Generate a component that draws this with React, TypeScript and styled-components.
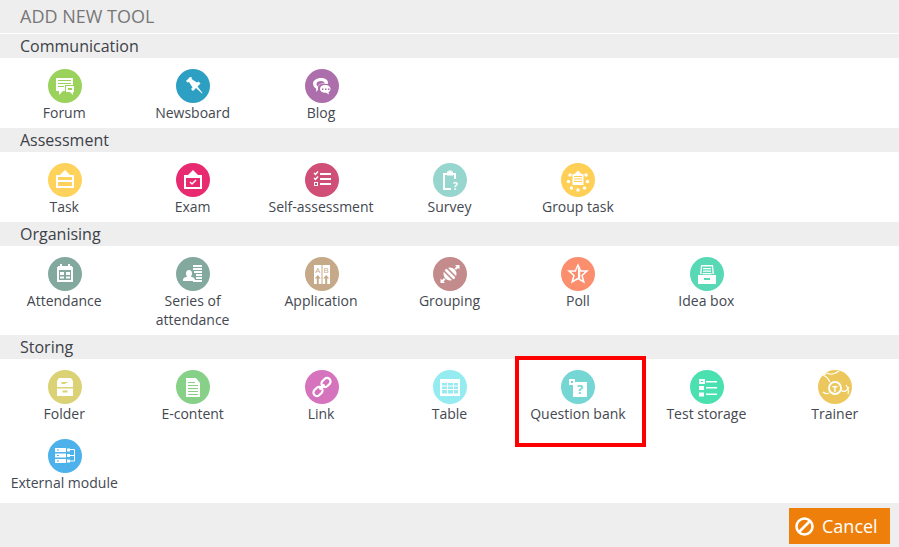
import * as React from 'react';
import styled, { createGlobalStyle } from 'styled-components';

const GlobalStyle = createGlobalStyle`
    html, body {
        margin: 0;
        padding: 0;
        background: #eeeeee;
        font-family: "Open Sans", "Liberation Sans", sans-serif;
    }
`;

const Page = styled.div`
    width: 899px;
    height: 547px;
    overflow: hidden;
    background: #eeeeee;
`;

const Title = styled.h1`
    margin: 0;
    height: 33px;
    padding-left: 20px;
    font-size: 18px;
    line-height: 33px;
    font-weight: 400;
    color: #777777;
    border-bottom: 1px solid #ffffff;
`;

const SectionTitle = styled.h2`
    margin: 0;
    height: 24px;
    padding-left: 20px;
    font-size: 16px;
    line-height: 24px;
    font-weight: 400;
    color: #3d4148;
`;

const ToolGrid = styled.div<{ $last?: boolean }>`
    display: grid;
    grid-template-columns: repeat(7, 1fr);
    row-gap: 16px;
    padding: 11px 0 ${props => (props.$last ? 11 : 6)}px;
    background: #ffffff;
`;

const Tool = styled.div<{ $marked?: boolean }>`
    position: relative;
    display: flex;
    flex-direction: column;
    align-items: center;
    text-align: center;
    &::after {
        content: "";
        display: ${props => (props.$marked ? 'block' : 'none')};
        position: absolute;
        top: -14px;
        left: 1px;
        width: 131px;
        height: 91px;
        box-sizing: border-box;
        border: 4px solid #ff0000;
    }
`;

const IconCircle = styled.div<{ $color: string }>`
    width: 34px;
    height: 34px;
    margin-left: 1px;
    border-radius: 50%;
    overflow: hidden;
    background: ${props => props.$color};
    color: ${props => props.$color};
    svg {
        display: block;
    }
`;

const ToolLabel = styled.span`
    font-size: 14px;
    line-height: 19px;
    color: #444850;
`;

const Footer = styled.div`
    display: flex;
    justify-content: flex-end;
    padding: 5px 9px 0 0;
`;

const CancelButton = styled.button`
    display: flex;
    align-items: center;
    gap: 8px;
    width: 101px;
    height: 36px;
    padding: 0 0 0 6px;
    border: 0;
    background: #ee7f0a;
    color: #ffffff;
    font-family: inherit;
    font-size: 18px;
`;

const Glyph = ({ children }: { children: React.ReactNode }) => (
    <svg width="34" height="34" viewBox="0 0 34 34" fill="#fff">{children}</svg>
);

const CancelIcon = () => (
    <svg width="19" height="19" viewBox="0 0 19 19" fill="none" stroke="#fff" strokeWidth="2.6">
        <circle cx="9.5" cy="9.5" r="8" />
        <path d="M4 15L15 4" />
    </svg>
);

const icons: Record<string, React.ReactNode> = {
    forum: <>
        <path d="M8 9h17v7h-8v6h-2l-4 4v-4H8z" />
        <path d="M10 11h13v1H10zM10 14h13v1H10zM10 17h6v1h-6z" fill="currentColor" />
        <path d="M18 17h8v6h-1v3l-3-3h-4z" />
        <path d="M20 19h4v2h-4z" fill="currentColor" />
    </>,
    newsboard: <path d="M14 8l-4 4 1.500 1.500 1.500-.5 3.500 5.500-1.500 1.500 2 2 3-3 6 5.500.5-.5-5-6.500 3-3-2-2-1.500 1-5.500-3.500.5-1.500z" />,
    blog: <>
        <path d="M16 9c4 0 7 2 7 4.500 0 .5 0 1-.3 1.500H17c-2.500 0-4 1.500-4 4 0 .5 0 1 .2 1.400L11 23l.3-3.300C9.300 18.500 8 16.500 8 14.500 8 11.500 11.500 9 16 9z" />
        <path d="M16 12c-2.500 0-4.500 1-4.500 3 0 1 .5 2 1.500 2.500.5-2 2-3 4-3h3c-.5-1.500-2-2.500-4-2.500z" fill="currentColor" />
        <path d="M20 16c3 0 5.500 1.500 5.500 4 0 1.300-.8 2.500-2 3.200l.5 2.300-3-1.800c-3.500.3-6-1.500-6-3.700 0-2.500 2-4 5-4z" />
        <path d="M17 19.500h1.500V21H17zM20 19.500h1.500V21H20zM23 19.500h1.500V21H23z" fill="currentColor" />
    </>,
    task: <>
        <path d="M17 7l5 5H12z" />
        <path fillRule="evenodd" d="M8 12h18v13H8zM10 14v3h14v-3zM10 19v4h14v-4z" />
    </>,
    exam: <>
        <path d="M17 7l5 5H12z" />
        <path fillRule="evenodd" d="M8 12h18v14H8zM10 15v9h14v-9z" />
        <path d="M14 19l2 2 4-4" fill="none" stroke="#fff" strokeWidth="1.500" />
    </>,
    self: <>
        <path d="M9 10l1.500 1.500L13 8.500M9 15l1.500 1.500 2.500-3" fill="none" stroke="#fff" strokeWidth="1.500" />
        <path fillRule="evenodd" d="M9 19h4v4H9zM10 20v2h2v-2z" />
        <path d="M15 10h11v2H15zM15 15h11v2H15zM15 20h11v2H15z" />
    </>,
    survey: <>
        <path fillRule="evenodd" d="M10 10h4V8.500h1.500V7.500h3v1H20V10h3v6h-2v-4H12v13h6v2H10z" />
        <path d="M14 9.500h6v3h-6z" />
        <text x="20" y="27" fontSize="10" fontWeight="700" fill="#fff" fontFamily="Open Sans">?</text>
    </>,
    group: <>
        <path d="M17 7.500l3.500 3.500h-7z" />
        <path fillRule="evenodd" d="M11.500 11h11v11h-11zM13 13v1h8v-1zM13 15.500v1h8v-1zM13 18v1h8v-1z" />
        <circle cx="17" cy="27" r="1.700" /><circle cx="10.500" cy="25" r="1.700" /><circle cx="23.500" cy="25" r="1.700" />
        <circle cx="7.500" cy="18.500" r="1.700" /><circle cx="26.500" cy="18.500" r="1.700" />
        <circle cx="9" cy="12" r="1.700" /><circle cx="25" cy="12" r="1.700" />
    </>,
    attendance: <>
        <path fillRule="evenodd" d="M10 9h2V7h2v2h6V7h2v2h2v1h1v15H9V10h1zM11 13v10h12V13z" />
        <path d="M12 15h4v3h-4zM18 15h4v3h-4zM12 19.500h4v2h-4zM18 19.500h4v2h-4z" />
    </>,
    series: <>
        <path d="M17 8h9v2h-9zM17 11h9v2h-9zM18 14h8v2h-8zM20 17h6v2h-6zM20 20h6v2h-6zM17 23h9v2h-9z" />
        <path d="M13 13c2 0 3 1.500 3 3.500 0 1.500-.7 2.500-1.200 3 1 .5 4.200 1.200 4.200 3.500v1H7v-1c0-2.300 3-3 4.200-3.500-.5-.5-1.200-1.500-1.200-3 0-2 1-3.500 3-3.500z" />
    </>,
    application: <>
        <path d="M9 8h7.500v19H9zM17.500 8H25v19h-7.500z" />
        <text x="12.800" y="16" fontSize="8" textAnchor="middle" fill="currentColor" fontFamily="Open Sans">A</text>
        <text x="21.200" y="16" fontSize="8" textAnchor="middle" fill="currentColor" fontFamily="Open Sans">B</text>
        <path d="M12.800 18l3 3.500h-2V27h-2v-5.500h-2zM21.200 18l3 3.500h-2V27h-2v-5.500h-2z" fill="currentColor" />
    </>,
    grouping: <>
        <circle cx="17" cy="17" r="6.500" />
        <path d="M12.500 9.500L24.500 21.500M9.500 12.500L21.500 24.500" fill="none" stroke="currentColor" strokeWidth="1.600" />
        <path d="M22 8h4.500v4.500l-1.500-1.500-2 2-1.500-1.500 2-2zM12 26H7.500v-4.500L9 23l2-2 1.500 1.500-2 2z" />
    </>,
    poll: <>
        <path d="M17 8l2.700 6h6.300l-5 4.500 1.800 6.500-5.800-3.500-5.800 3.500 1.800-6.500-5-4.500h6.300z" fill="none" stroke="#fff" strokeWidth="1.500" strokeLinejoin="miter" />
        <path d="M17 9l2.200 5.500v7.500L17 21z" />
    </>,
    idea: <>
        <path fillRule="evenodd" d="M11 8h12l1 9h-1.500l-.5-7.500H12l-.5 7.500H10z" />
        <path d="M13 11h8v1.300h-8zM13 13.500h8v1.300h-8zM12.500 16h9v1.300h-9z" />
        <path fillRule="evenodd" d="M8 18h18v9H8zM14 21v2h6v-2z" />
    </>,
    folder: <>
        <path fillRule="evenodd" d="M11 8h12l2 3v6H9v-6zM13.500 12v2h3l4-2z" />
        <path fillRule="evenodd" d="M9 18.500h16V26H9zM14.500 20.500v2h5v-2z" />
    </>,
    econtent: <>
        <path fillRule="evenodd" d="M10 8h10l4 5v14H10z" />
        <path d="M12 12h7v1h-7zM12 15h10v1H12zM12 18h10v1H12zM12 21h10v1H12zM12 24h10v1H12z" fill="currentColor" />
    </>,
    link: <g fill="none" stroke="#fff" strokeWidth="2.200">
        <rect x="16" y="9" width="10" height="7" rx="3.500" transform="rotate(-45 21 12.500)" />
        <rect x="8" y="18" width="10" height="7" rx="3.500" transform="rotate(-45 13 21.500)" />
        <path d="M14.500 19.500l5-5" />
    </g>,
    table: <>
        <path fillRule="evenodd" d="M7 9h20v17H7zM9 13v2.500h5V13zM15 13v2.500h5V13zM21 13v2.500h4V13zM9 16.500v2.500h5v-2.500zM15 16.500v2.500h5v-2.500zM21 16.500v2.500h4v-2.500zM9 20v3.500h5V20zM15 20v3.500h5V20zM21 20v3.500h4V20z" />
    </>,
    question: <>
        <path fillRule="evenodd" d="M8 9h6v3h12v15H12v-12H8zM10 11v2h2v-2z" />
        <text x="19" y="24" fontSize="13" fontWeight="700" textAnchor="middle" fill="currentColor" fontFamily="Open Sans">?</text>
    </>,
    storage: <>
        <path fillRule="evenodd" d="M9 9h6v5H9zM11 11v1h2v-1z" />
        <path d="M9 16h5v4H9zM9 22.500h5v4H9z" />
        <path d="M16 11h11v1.500H16zM16 17h11v1.500H16zM16 23.500h11V25H16z" />
    </>,
    trainer: <>
        <circle cx="17" cy="18" r="6" fill="none" stroke="#fff" strokeWidth="1.800" />
        <text x="17" y="21.500" fontSize="9.500" fontWeight="700" textAnchor="middle" fill="#fff" fontFamily="Open Sans">T</text>
        <path d="M0 0h7l2 3-3 3-6-1z" />
        <path d="M6 6c3 0 4 3 6 6M9 3c3 2 8 1 12-2M23 20c3 3 6 1 8-3M28 15c2 3 3 6 2 9M11 23c-2 1-4 1-6-1" fill="none" stroke="#fff" strokeWidth="1.200" />
    </>,
    external: <>
        <path fillRule="evenodd" d="M7 9h11v4H7zM9 10.500v1h2v-1zM7 14.500h11v4H7zM9 16v1h2v-1zM7 20h11v4H7zM9 21.500v1h2v-1z" />
        <path d="M19 9.500h3v3h-3zM19 15h3v3h-3zM19 20.500h3v3h-3z" />
        <path d="M22 10.500h4.500v11.500H22M22 16.500h4.500" fill="none" stroke="#fff" />
    </>,
};

interface ToolItem {
    label: string;
    icon: string;
    color: string;
    marked?: boolean;
}

interface ToolSection {
    title: string;
    tools: ToolItem[];
}

const sections: ToolSection[] = [
    {
        title: 'Communication',
        tools: [
            { label: 'Forum', icon: 'forum', color: '#9ad25c' },
            { label: 'Newsboard', icon: 'newsboard', color: '#2d9fc3' },
            { label: 'Blog', icon: 'blog', color: '#ad6fac' },
        ],
    },
    {
        title: 'Assessment',
        tools: [
            { label: 'Task', icon: 'task', color: '#ffd25c' },
            { label: 'Exam', icon: 'exam', color: '#e82a71' },
            { label: 'Self-assessment', icon: 'self', color: '#cf4f77' },
            { label: 'Survey', icon: 'survey', color: '#97d6cf' },
            { label: 'Group task', icon: 'group', color: '#ffcf56' },
        ],
    },
    {
        title: 'Organising',
        tools: [
            { label: 'Attendance', icon: 'attendance', color: '#83a99e' },
            { label: 'Series of attendance', icon: 'series', color: '#83a99e' },
            { label: 'Application', icon: 'application', color: '#c5a988' },
            { label: 'Grouping', icon: 'grouping', color: '#c38b8b' },
            { label: 'Poll', icon: 'poll', color: '#fb8f6d' },
            { label: 'Idea box', icon: 'idea', color: '#58d8b5' },
        ],
    },
    {
        title: 'Storing',
        tools: [
            { label: 'Folder', icon: 'folder', color: '#dad274' },
            { label: 'E-content', icon: 'econtent', color: '#86d087' },
            { label: 'Link', icon: 'link', color: '#d673bd' },
            { label: 'Table', icon: 'table', color: '#95ecf0' },
            { label: 'Question bank', icon: 'question', color: '#75d6d3', marked: true },
            { label: 'Test storage', icon: 'storage', color: '#4be0b0' },
            { label: 'Trainer', icon: 'trainer', color: '#ecc85c' },
            { label: 'External module', icon: 'external', color: '#4db1ec' },
        ],
    },
];

export default function App() {
    return (
        <Page>
            <GlobalStyle />
            <Title>ADD NEW TOOL</Title>
            {sections.map((section, i) => (
                <section key={section.title}>
                    <SectionTitle>{section.title}</SectionTitle>
                    <ToolGrid $last={i === sections.length - 1}>
                        {section.tools.map(tool => (
                            <Tool key={tool.label} $marked={tool.marked}>
                                <IconCircle $color={tool.color}>
                                    <Glyph>{icons[tool.icon]}</Glyph>
                                </IconCircle>
                                <ToolLabel>{tool.label}</ToolLabel>
                            </Tool>
                        ))}
                    </ToolGrid>
                </section>
            ))}
            <Footer>
                <CancelButton>
                    <CancelIcon />
                    Cancel
                </CancelButton>
            </Footer>
        </Page>
    );
}
